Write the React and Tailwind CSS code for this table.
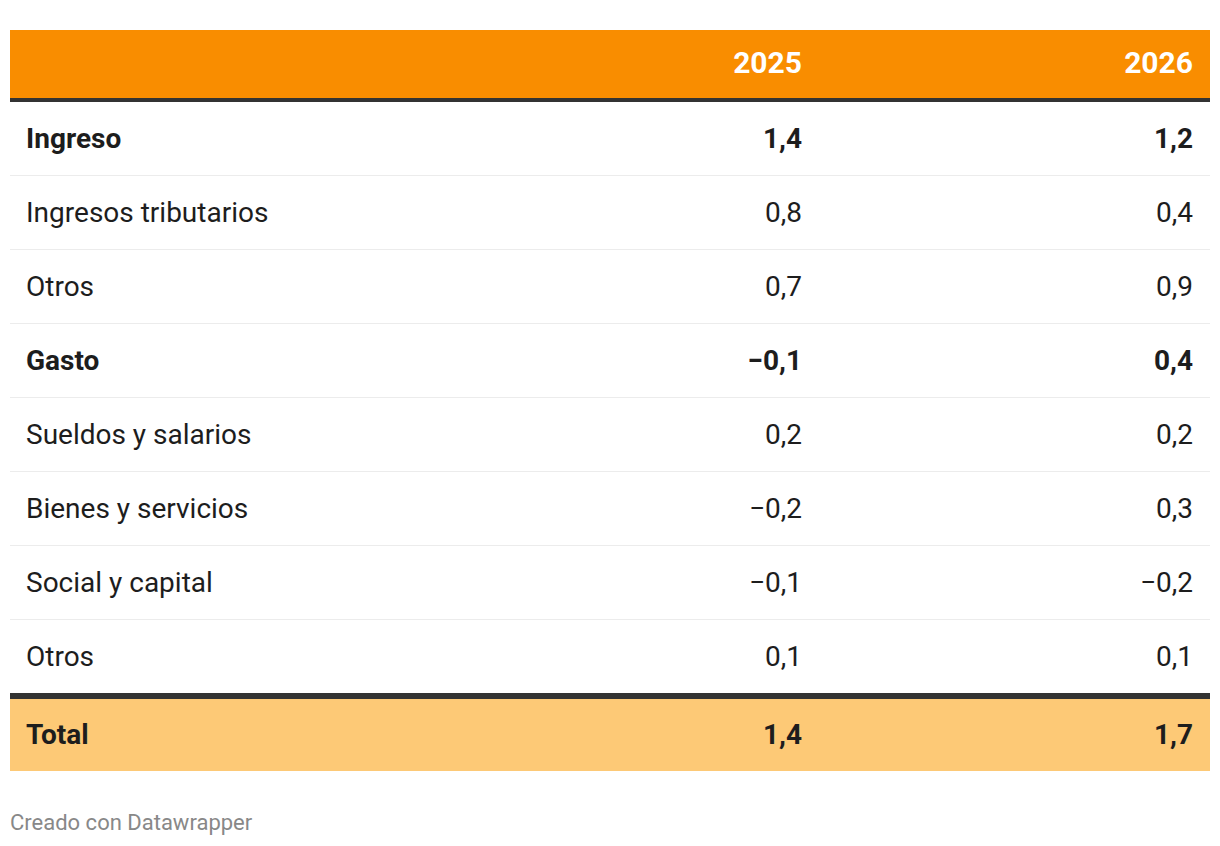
import React from 'react';

const rows = [
    { label: 'Ingreso', a: '1,4', b: '1,2', bold: true },
    { label: 'Ingresos tributarios', a: '0,8', b: '0,4' },
    { label: 'Otros', a: '0,7', b: '0,9' },
    { label: 'Gasto', a: '−0,1', b: '0,4', bold: true },
    { label: 'Sueldos y salarios', a: '0,2', b: '0,2' },
    { label: 'Bienes y servicios', a: '−0,2', b: '0,3' },
    { label: 'Social y capital', a: '−0,1', b: '−0,2' },
    { label: 'Otros', a: '0,1', b: '0,1' },
];

const App = () => {
    return (
        <div
            className="w-full min-h-screen bg-white px-[10px] pt-[30px] text-[#1d1d1d]"
            style={{ fontFamily: 'Roboto, "Liberation Sans", sans-serif' }}
        >
            {/* Header */}
            <div className="grid grid-cols-[1fr_200px_391px] h-[72px] pb-[3px] bg-[#f98d00] border-b-4 border-[#333333] text-white text-[30px] font-bold items-center">
                <div />
                <div className="text-right pr-[17px]">2025</div>
                <div className="text-right pr-[17px]">2026</div>
            </div>

            {/* Body rows */}
            {rows.map((r, i) => (
                <div
                    key={i}
                    className={
                        'grid grid-cols-[1fr_200px_391px] items-center text-[28px] ' +
                        (i < rows.length - 1 ? 'h-[74px] border-b border-[#ececec]' : 'h-[73px]') +
                        (r.bold ? ' font-bold' : '')
                    }
                >
                    <div className="pl-[16px]">{r.label}</div>
                    <div className="text-right pr-[17px]">{r.a}</div>
                    <div className="text-right pr-[17px]">{r.b}</div>
                </div>
            ))}

            {/* Total */}
            <div className="grid grid-cols-[1fr_200px_391px] items-center h-[78px] bg-[#fdc976] border-t-[6px] border-[#333333] text-[28px] font-bold">
                <div className="pl-[16px]">Total</div>
                <div className="text-right pr-[17px]">1,4</div>
                <div className="text-right pr-[17px]">1,7</div>
            </div>

            <p className="mt-[35px] text-[22px] text-[#888888]">Creado con Datawrapper</p>
        </div>
    );
};

export default App;
